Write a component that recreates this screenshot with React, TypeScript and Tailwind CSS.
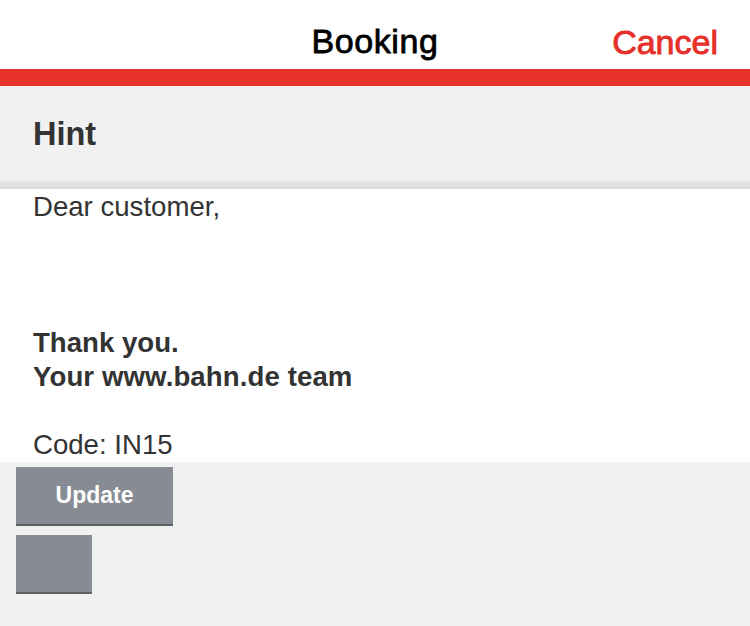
import React from "react";

export default function App() {
  const font = { fontFamily: '"Liberation Sans", Arial, sans-serif' };
  return (
    <div className="w-[750px] h-[626px] bg-[#f1f1f1] flex flex-col overflow-hidden" style={font}>
      <div className="h-[69px] bg-white relative flex items-center justify-center">
        <span className="text-[34px] text-black tracking-[0.6px] mt-[14px] [-webkit-text-stroke:0.8px_black]">Booking</span>
        <span className="absolute right-[32px] top-[20px] text-[34px] text-[#e5312a] leading-[44px] [-webkit-text-stroke:0.9px_#e5312a]">Cancel</span>
      </div>
      <div className="h-[17px] bg-[#e8332a]" />
      <div className="h-[94px] bg-[#f1f1f1] flex items-center px-[33px]">
        <span className="text-[32.5px] font-bold text-[#333] mt-[2px]">Hint</span>
      </div>
      <div className="h-[9px] bg-gradient-to-b from-[#ececec] to-[#d9d9d9]" />
      <div className="bg-white px-[33px] pt-[1px] text-[27.6px] leading-[34px] text-[#333]">
        <div>Dear customer,</div>
        <div className="h-[102px]" />
        <div className="font-bold">Thank you.</div>
        <div className="font-bold tracking-[0.1px]">Your www.bahn.de team</div>
        <div className="h-[34px]" />
        <div>Code: IN15</div>
      </div>
      <div className="flex flex-col items-start gap-[9px] px-[16px] pt-[5px]">
        <button className="w-[157px] h-[59px] bg-[#878b93] border-b-[2px] border-[#5c6067] text-white font-bold text-[23px] flex items-center justify-center">
          Update
        </button>
        <button className="w-[76px] h-[59px] bg-[#878b93] border-b-[2px] border-[#5c6067]" />
      </div>
    </div>
  );
}
